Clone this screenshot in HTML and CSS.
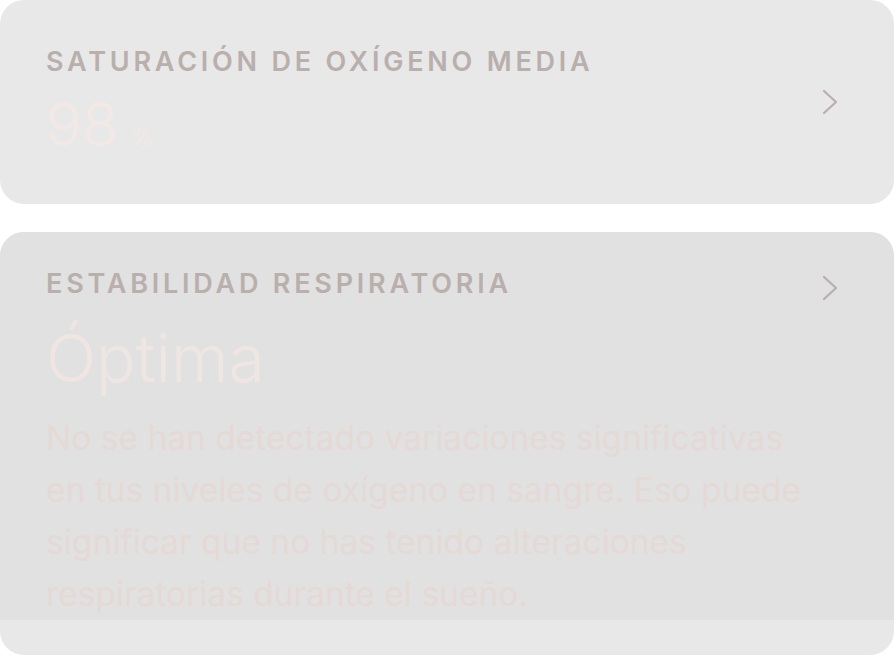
FILE: index.html
```html
<!DOCTYPE html>
<html lang="es">
<head>
<meta charset="utf-8">
<title>Oxígeno</title>
<link rel="stylesheet" href="styles.css">
</head>
<body>
<main class="list">
  <section class="card card-sat">
    <div class="card-main">
      <h2 class="label">Saturación de oxígeno media</h2>
      <div class="value"><span class="num">98</span><span class="unit">%</span></div>
    </div>
    <svg class="chev" viewBox="0 0 16 26" width="16" height="26" aria-hidden="true"><polyline points="2,2 14,13 2,24" fill="none" stroke="#b9afac" stroke-width="2.2" stroke-linecap="round" stroke-linejoin="round"/></svg>
  </section>
  <section class="card card-resp">
    <div class="panel">
      <div class="head">
        <h2 class="label">Estabilidad respiratoria</h2>
        <svg class="chev chev-head" viewBox="0 0 16 26" width="16" height="26" aria-hidden="true"><polyline points="2,2 14,13 2,24" fill="none" stroke="#b9afac" stroke-width="2.2" stroke-linecap="round" stroke-linejoin="round"/></svg>
      </div>
      <div class="status">Óptima</div>
      <p class="desc">No se han detectado variaciones significativas en tus niveles de oxígeno en sangre. Eso puede significar que no has tenido alteraciones respiratorias durante el sueño.</p>
    </div>
    <div class="foot"></div>
  </section>
</main>
</body>
</html>
```
FILE: styles.css
```css
* { box-sizing: border-box; }
html, body { margin: 0; padding: 0; background: #ffffff; }
body {
  font-family: Inter, "Liberation Sans", sans-serif;
  width: 895px;
  height: 656px;
  overflow: hidden;
}
.list {
  width: 894px;
  display: flex;
  flex-direction: column;
  gap: 28px;
}
.card {
  border-radius: 24px;
  background: #e8e8e8;
  overflow: hidden;
}
.card-sat {
  height: 204px;
  display: flex;
  align-items: flex-start;
  padding: 46px 56px 0 46px;
}
.card-sat .chev { align-self: center; margin-top: -46px; }
.card-main { flex: 1; }
.label {
  margin: 0;
  font-size: 27px;
  line-height: 32px;
  font-weight: 600;
  letter-spacing: 0.14em;
  text-transform: uppercase;
  color: #b9afac;
}
.value {
  margin-top: 16px;
  display: flex;
  align-items: baseline;
  color: #f2e9e6;
}
.num {
  font-size: 60px;
  line-height: 60px;
  font-weight: 300;
}
.unit {
  font-size: 26px;
  margin-left: 11px;
  font-weight: 300;
}
.chev { display: block; flex: none; }
.card-resp { height: 423px; display: flex; flex-direction: column; }
.panel {
  background: #e1e1e1;
  padding: 36px 56px 0 46px;
}
.head {
  display: flex;
  align-items: flex-start;
  justify-content: space-between;
}
.chev-head { margin-top: 7px; }
.status {
  margin-top: 17px;
  font-size: 66px;
  line-height: 80px;
  font-weight: 300;
  color: #efe6e3;
}
.desc {
  margin: 14px 0 0;
  max-width: 770px;
  font-size: 33.5px;
  line-height: 52px;
  font-weight: 400;
  color: #e5d9d6;
}
.foot { flex: 1; }
```
